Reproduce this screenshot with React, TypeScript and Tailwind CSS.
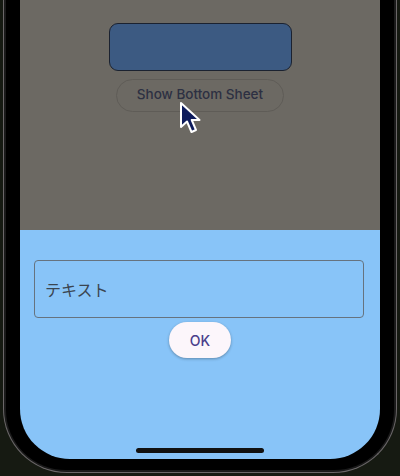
import React from 'react';

const Cursor: React.FC = () => (
  <svg className="absolute left-[179px] top-[101px] h-[34px] w-[24px]" viewBox="0 0 24 34" fill="none">
    <path
      d="M2 2 L2 26 L8 20.5 L12.5 31 L17 29 L12.7 19 L20.5 19 Z"
      fill="#0d1b5c"
      stroke="#ffffff"
      strokeWidth={2}
      strokeLinejoin="round"
    />
  </svg>
);

export default function App() {
  return (
    <div className="relative h-[476px] w-[400px] overflow-hidden bg-[#161a12] px-[3px]">
      {/* phone frame */}
      <div className="h-[473px] rounded-b-[64px] border-x-[1.5px] border-b-[1.5px] border-[#6b6769] bg-[#1a1a1a] px-[2px] pb-[2px]">
        <div className="h-full rounded-b-[60px] bg-black px-[14px] pb-[11px]">
          <div className="flex h-full flex-col overflow-hidden rounded-b-[50px]">
            {/* dimmed page behind the sheet */}
            <div className="flex h-[230px] flex-col items-center bg-[#6c6963] pt-[23px]">
              <div className="h-[48px] w-[183px] rounded-[9px] border border-[#1b2230] bg-[#3c5a82]" />
              <button className="mt-[8px] flex h-[33px] w-[168px] items-center justify-center rounded-full border border-[#5f5c57] pb-[2px] font-['Inter',sans-serif] text-[13.5px] font-medium text-[#2d3042]">
                Show Bottom Sheet
              </button>
            </div>
            {/* bottom sheet */}
            <div className="flex flex-1 flex-col items-center bg-[#88c4f8] pt-[30px]">
              <div className="ml-[-2px] flex h-[58px] w-[330px] items-center rounded-[4px] border border-[#66737f] px-[10px] font-['Noto_Sans_CJK_JP',sans-serif] text-[16px] text-[#3b4550]">
                テキスト
              </div>
              <button className="mt-[4px] flex h-[36px] w-[62px] items-center justify-center rounded-full bg-[#fcf6fb] font-['Inter',sans-serif] text-[14px] font-medium text-[#4a3f8c] shadow-[0_1px_3px_rgba(0,0,0,0.3)]">
                OK
              </button>
              <div className="flex-1" />
              <div className="mb-[6px] h-[5px] w-[128px] rounded-full bg-[#111111]" />
            </div>
          </div>
        </div>
      </div>
      <Cursor />
    </div>
  );
}
